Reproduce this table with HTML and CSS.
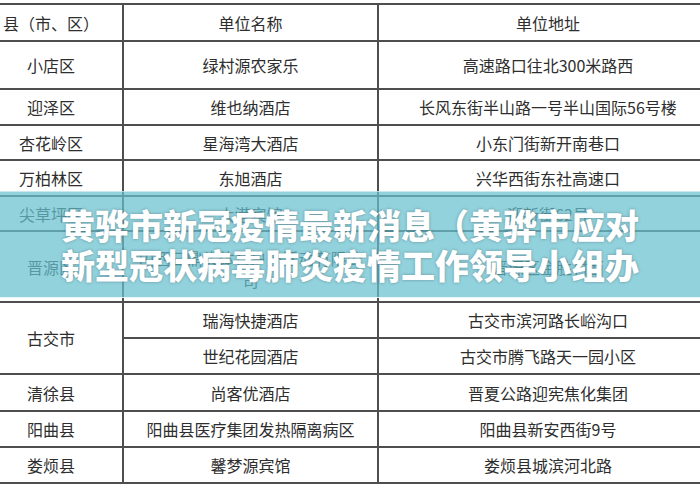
FILE: index.html
```html
<!DOCTYPE html>
<html lang="zh-CN">
<head>
<meta charset="utf-8">
<title>黄骅市新冠疫情最新消息</title>
<link rel="stylesheet" href="styles.css">
</head>
<body>
<div class="page">
  <table class="hotels">
    <colgroup>
      <col class="c-area"><col class="c-name"><col class="c-addr">
    </colgroup>
    <tr class="h37"><td>县（市、区）</td><td>单位名称</td><td>单位地址</td></tr>
    <tr class="h48"><td>小店区</td><td>绿村源农家乐</td><td>高速路口往北300米路西</td></tr>
    <tr class="h36"><td>迎泽区</td><td>维也纳酒店</td><td>长风东街半山路一号半山国际56号楼</td></tr>
    <tr class="h35"><td>杏花岭区</td><td>星海湾大酒店</td><td>小东门街新开南巷口</td></tr>
    <tr class="h36"><td>万柏林区</td><td>东旭酒店</td><td>兴华西街东社高速口</td></tr>
    <tr class="h35"><td>尖草坪区</td><td>大港宾馆</td><td>迎新街62号</td></tr>
    <tr class="h71"><td>晋源区</td><td class="wrap">山西三鼎头体育户外活动有限公司</td><td>晋源区金胜村西</td></tr>
    <tr class="h36"><td rowspan="2">古交市</td><td>瑞海快捷酒店</td><td>古交市滨河路长峪沟口</td></tr>
    <tr class="h36"><td>世纪花园酒店</td><td>古交市腾飞路天一园小区</td></tr>
    <tr class="h37"><td>清徐县</td><td>尚客优酒店</td><td>晋夏公路迎宪焦化集团</td></tr>
    <tr class="h36"><td>阳曲县</td><td>阳曲县医疗集团发热隔离病区</td><td>阳曲县新安西街9号</td></tr>
    <tr class="h36"><td>娄烦县</td><td>馨梦源宾馆</td><td>娄烦县城滨河北路</td></tr>
  </table>
  <div class="banner">
    <p class="banner-title">黄骅市新冠疫情最新消息（黄骅市应对<br>新型冠状病毒肺炎疫情工作领导小组办</p>
  </div>
</div>
</body>
</html>
```

FILE: styles.css
```css
html, body {
  margin: 0;
  padding: 0;
  background: #ffffff;
}
body {
  width: 700px;
  height: 490px;
  overflow: hidden;
}
.page {
  position: relative;
  width: 700px;
  height: 490px;
  overflow: hidden;
  padding-top: 3px;
  box-sizing: border-box;
}
.hotels {
  margin-left: -22px;
  width: 739px;
  table-layout: fixed;
  border-collapse: collapse;
  font-family: "Noto Sans CJK SC", "Noto Sans", sans-serif;
  font-size: 16px;
  color: #2e2e2e;
}
.c-area { width: 144px; }
.c-name { width: 255px; }
.c-addr { width: 340px; }
.hotels td {
  border: 2px solid #4e4e4e;
  text-align: center;
  vertical-align: middle;
  padding: 0 4px;
  line-height: 22px;
  white-space: nowrap;
}
.hotels td.wrap {
  white-space: normal;
  padding: 4px 12px 0;
}
.h35 { height: 35px; }
.h36 { height: 36px; }
.h37 { height: 37px; }
.h48 { height: 48px; }
.h71 { height: 71px; }
.banner {
  position: absolute;
  left: 0;
  top: 191px;
  width: 700px;
  height: 107px;
  background: rgba(104, 192, 207, 0.72);
  border-top: 1px solid rgba(255, 255, 255, 0.5);
  border-bottom: 1px solid rgba(255, 255, 255, 0.8);
  box-sizing: border-box;
  display: flex;
  align-items: center;
  justify-content: center;
}
.banner-title {
  margin: 0;
  font-family: "Noto Sans CJK SC", "Noto Sans", sans-serif;
  font-weight: 900;
  font-size: 34px;
  line-height: 40px;
  color: #ffffff;
  text-align: center;
  white-space: nowrap;
  text-shadow: 0 0 3px rgba(40, 60, 70, 0.45);
}
```
